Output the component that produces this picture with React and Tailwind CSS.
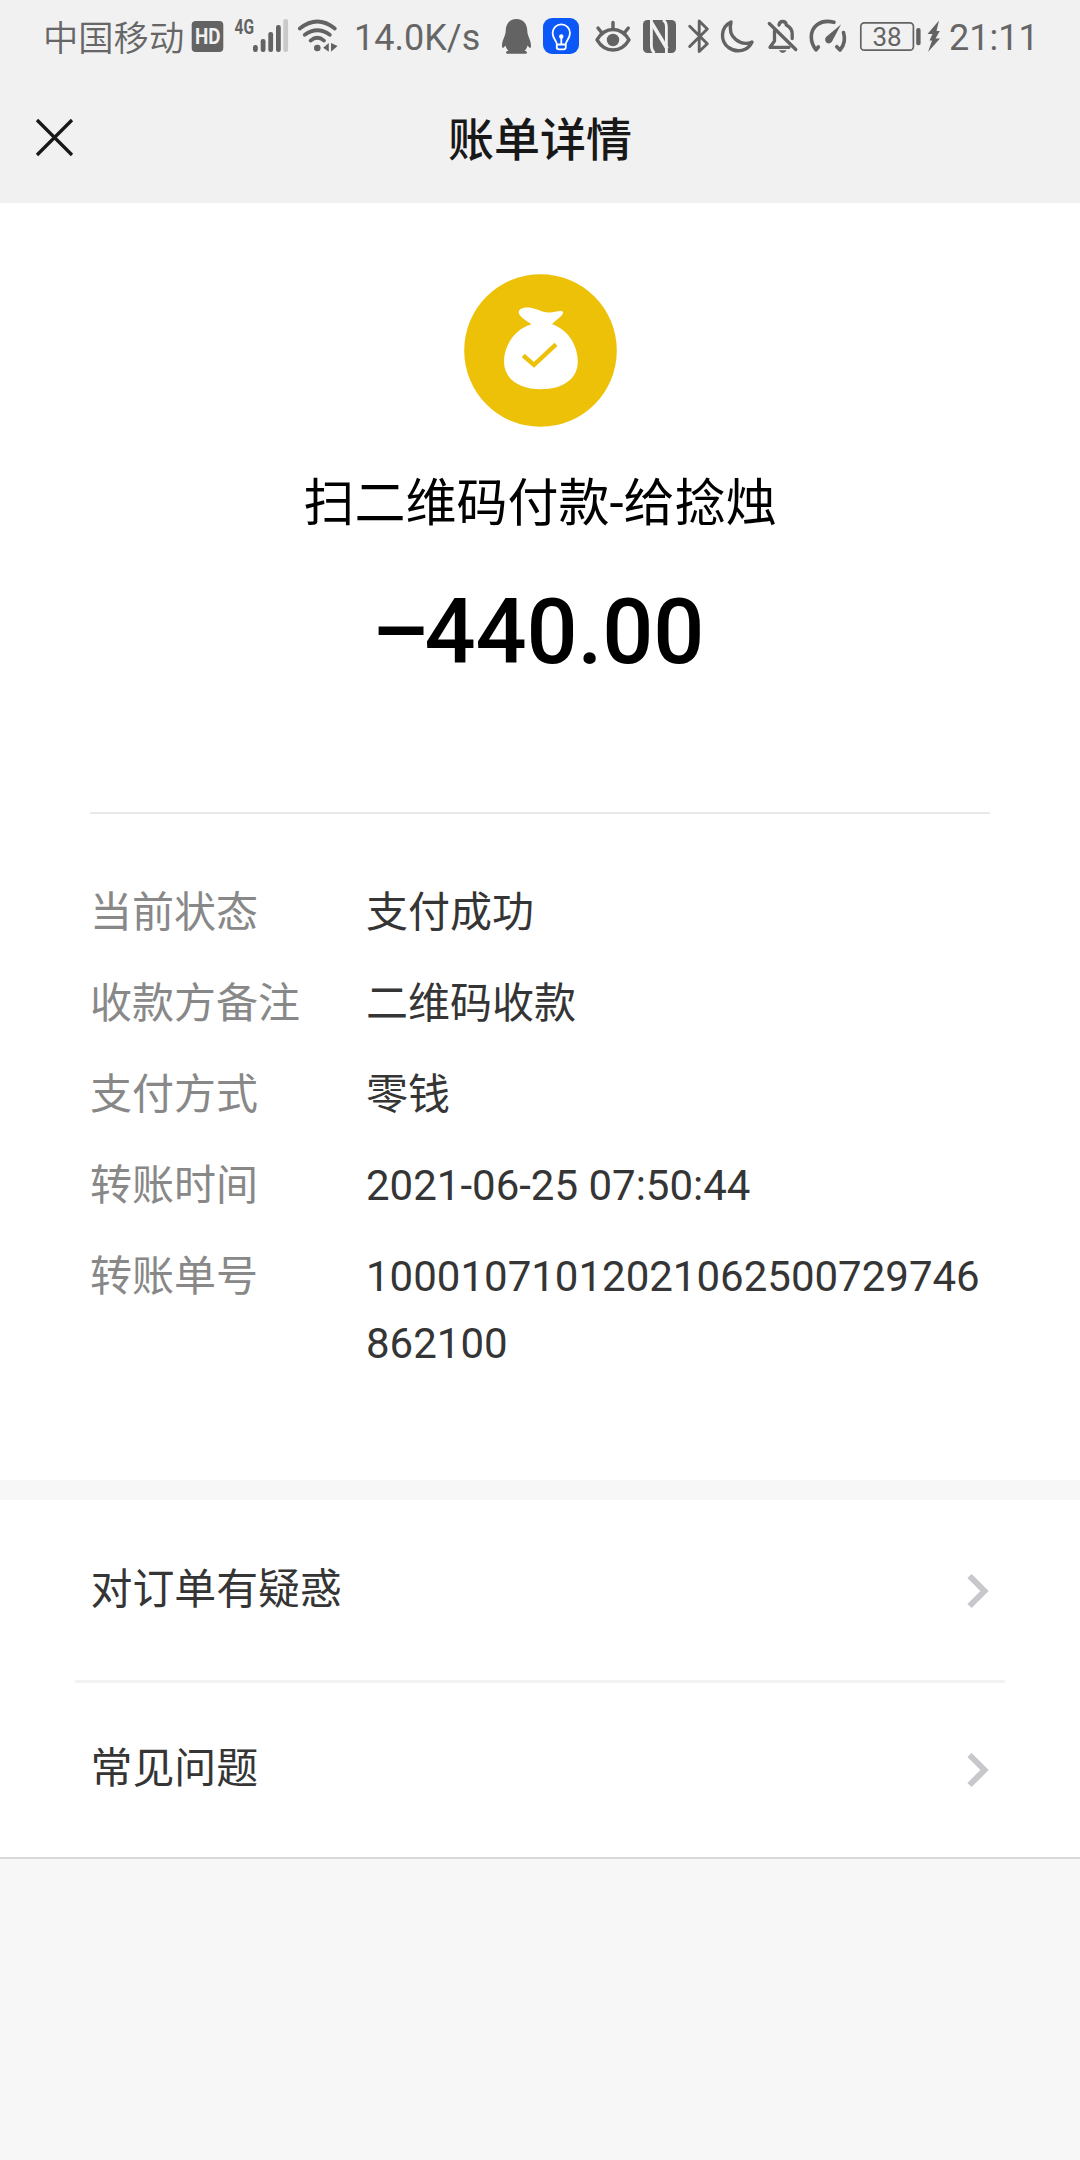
const FONT = "font-[Roboto,'Noto_Sans_CJK_SC',sans-serif]";

// A status bar glyph: x is its left edge in bar coordinates, w its slot width.
function Slot({ x, w, children }) {
  return (
    <svg
      className="shrink-0"
      width={w}
      height="76"
      viewBox={`${x} 0 ${w} 76`}
      fill="none"
      stroke="#636363"
      strokeLinecap="round"
      strokeLinejoin="round"
    >
      {children}
    </svg>
  );
}

const G = "#636363";

function StatusBar() {
  return (
    <div className="flex h-[76px] items-center overflow-hidden pl-[43px] text-[36px] leading-[76px] text-[#666666]">
      <span className="h-[76px] w-[143px] shrink-0 whitespace-nowrap text-[35.3px] font-[350] leading-[78px]">中国移动</span>
      <Slot x={186} w={42}>
        <rect x="191.7" y="21" width="31.6" height="31" rx="4" fill={G} stroke="none" />
        <text x="195" y="44" fontSize="21.5" fontWeight="700" textLength="25.5" lengthAdjust="spacingAndGlyphs" fill="#f1f1f1" stroke="none">HD</text>
      </Slot>
      <Slot x={228} w={64}>
        <text x="234.6" y="33.7" fontSize="19.7" fontWeight="700" textLength="19.5" lengthAdjust="spacingAndGlyphs" fill={G} stroke="none">4G</text>
        <g fill={G} stroke="none">
          <rect x="253" y="45" width="4.8" height="7" rx="2.2" />
          <rect x="260.7" y="39" width="4.8" height="13" rx="2.2" />
          <rect x="268.3" y="32" width="4.8" height="20" rx="2.2" />
          <rect x="276" y="25" width="4.8" height="27" rx="2.2" />
          <rect x="283.3" y="19" width="4.8" height="33" rx="2.2" fill="#c9c9c9" />
        </g>
      </Slot>
      <Slot x={292} w={62}>
        <g strokeWidth="3.8">
          <path d="M299.8 28.5Q317.3 14.5 334.8 28.5" />
          <path d="M304.8 34.8Q317.3 25.6 329.8 34.8" />
          <path d="M310.6 40.6Q317.3 35 324 40.6" />
        </g>
        <circle cx="317.3" cy="48" r="3.3" fill={G} stroke="none" />
        <path d="M323.2 47.8L328.8 43V51.8ZM331 43L337.6 46L331 51.8Z" fill={G} stroke="none" />
      </Slot>
      <span className="h-[76px] w-[136px] shrink-0 whitespace-nowrap">14.0K/s</span>
      <Slot x={490} w={48}>
        <path
          d="M516.5 19C509.5 19 505.7 24 505.7 31C505.7 36 502 40 502 45.5C502 48.5 503 49 505.5 45.5C506 48 507 49.5 508.5 50.7C505 51.3 505.5 53.7 508 53.7H525C527.5 53.7 528 51.3 524.5 50.7C526 49.5 527 48 527.5 45.5C530 49 531 48.5 531 45.5C531 40 527.3 36 527.3 31C527.3 24 523.5 19 516.5 19Z"
          fill={G}
          stroke="none"
        />
      </Slot>
      <Slot x={538} w={48}>
        <rect x="543" y="18" width="36" height="36" rx="9" fill="#0b57f7" stroke="none" />
        <g stroke="#fff" strokeWidth="1.8">
          <path d="M556.8 48.5V44C556.8 41 552.6 38.5 552.6 33A8.7 8.7 0 0 1 570 33C570 38.5 565.8 41 565.8 44V47Q565.8 49.3 563.5 49.3H559Q556.8 49.3 556.8 47M557 44.5H565.6M561.3 37V44" />
        </g>
        <circle cx="561.3" cy="36.5" r="2.2" fill="#fff" stroke="none" />
      </Slot>
      <Slot x={586} w={52}>
        <g strokeWidth="3.4">
          <path d="M597 39.8C605 26 621 26 629 39.8C621 53.3 605 53.3 597 39.8Z" />
          <path d="M613 22.5V28M598 28L602 33M628.3 28L624.3 33" />
        </g>
        <circle cx="613" cy="40" r="6.2" fill={G} stroke="none" />
      </Slot>
      <Slot x={638} w={44}>
        <rect x="643" y="20" width="33" height="33" rx="4.5" fill={G} stroke="none" />
        <g stroke="#f1f1f1" strokeLinecap="butt" strokeLinejoin="miter">
          <path d="M654.5 53Q651.4 50.5 651.4 46V20" strokeWidth="2.8" />
          <path d="M651.4 22.5L667 48.5" strokeWidth="3.6" />
          <path d="M663 20Q666.4 22 666.4 27V53" strokeWidth="2.8" />
        </g>
      </Slot>
      <Slot x={682} w={33}>
        <path d="M689.7 26.3L707.3 43.8L699.2 51.5V21L707.3 29L689.7 46.5" strokeWidth="2.9" />
      </Slot>
      <Slot x={715} w={45}>
        <path d="M731 22C720.5 27 719.8 41 728.5 47.5C737 53.5 748 51 752 42C741 46.5 727 38 731 22Z" strokeWidth="3.4" />
      </Slot>
      <Slot x={760} w={44}>
        <g strokeWidth="3.3">
          <path d="M769.3 23.5L795.8 49.5" />
          <path d="M774.5 31V41L770 47.3H789" />
          <path d="M779 25Q779.5 21.5 782.7 21.5Q786 21.5 786.3 25Q792.2 28 792.2 34V38.5" />
        </g>
        <path d="M779 50.3H786.5Q785.5 53 782.7 53Q780 53 779 50.3Z" fill={G} stroke="none" />
      </Slot>
      <Slot x={804} w={49}>
        <g strokeWidth="3.6">
          <path d="M834 22.3C820 18.5 811.3 27 811.3 37C811.3 42.5 813.3 46.5 816 49.8L818.3 47" />
          <path d="M843.5 32.5C845.5 39 844 45.5 840 50L836.8 46.7" />
        </g>
        <path d="M841 24.5L832 41.5Q829.5 44.5 826.5 42.7Q824 40 826 37Z" fill={G} stroke="none" />
      </Slot>
      <Slot x={853} w={70}>
        <rect x="860.8" y="22.8" width="52.6" height="27.4" rx="3.5" strokeWidth="1.7" />
        <rect x="916.2" y="28" width="4.4" height="17.3" rx="2" fill={G} stroke="none" />
        <text x="887" y="46" fontSize="26" textAnchor="middle" fill={G} stroke="none">38</text>
      </Slot>
      <Slot x={923} w={26}>
        <path d="M939 20.5L927.5 34H932.5L929.5 40.5H932L928 52L940 38.5H935.5L939.8 31H936.5Z" fill={G} stroke="none" />
      </Slot>
      <span className="h-[76px] shrink-0 whitespace-nowrap">21:11</span>
    </div>
  );
}

function TitleBar() {
  return (
    <div className="grid h-[127px] grid-cols-[1fr_auto_1fr] items-center">
      <svg className="mb-[4px] ml-[35px]" width="39" height="39" viewBox="0 0 39 39" stroke="#181818" strokeWidth="3.3">
        <path d="M2 2L37 37M37 2L2 37" />
      </svg>
      <h1 className="text-[46px] font-medium leading-none text-[#181818]">账单详情</h1>
    </div>
  );
}

function MoneyBag() {
  return (
    <svg width="154" height="154" viewBox="463 272.5 154 154">
      <circle cx="540.5" cy="350" r="76.3" fill="#edc107" />
      <path
        d="M531.5 323.8C526 320 519 316 518.7 312C518.5 308 524 306.5 529.5 307C537 308 543 312.5 550 312C555 311.5 561.5 309 563 311.5C564 315 556 319.5 552 323.8C568 329 577.8 345 577.8 361C577.8 379 562 388.7 541 388.7C520 388.7 504 379 504 361C504 344 516 328 531.5 323.8Z"
        fill="#fff"
      />
      <path d="M523.2 355L534 364.3L556 343.8" fill="none" stroke="#edc107" strokeWidth="4.4" />
    </svg>
  );
}

const DETAILS = [
  ["当前状态", "支付成功"],
  ["收款方备注", "二维码收款"],
  ["支付方式", "零钱"],
  ["转账时间", "2021-06-25 07:50:44"],
  ["转账单号", "10001071012021062500729746862100"],
];

function Details() {
  return (
    <dl className="mt-[65px] flex flex-col gap-6 text-[42px] leading-[67px]">
      {DETAILS.map(([label, value]) => (
        <div key={label} className="flex">
          <dt className="w-[276px] shrink-0 text-[#888888]">{label}</dt>
          <dd className="min-w-0 flex-1 break-all text-[#353535]">{value}</dd>
        </div>
      ))}
    </dl>
  );
}

function LinkRow({ children }) {
  return (
    <div className="flex items-center justify-between pl-[15.5px] pr-4 text-[41.9px] leading-[60px] text-[#353535]">
      <span className="-mt-[2px]">{children}</span>
      <svg width="22" height="36" viewBox="0 0 22 36" fill="none" stroke="#c8c8cc" strokeWidth="6">
        <path d="M2.5 3L17.5 18L2.5 33" />
      </svg>
    </div>
  );
}

export default function App() {
  return (
    <div className={`h-[2160px] w-[1080px] overflow-hidden bg-[#f7f7f7] ${FONT}`}>
      <header className="h-[203px] bg-[#f1f1f1]">
        <StatusBar />
        <TitleBar />
      </header>
      <main>
        <section className="flex h-[1277px] flex-col bg-white px-[90px]">
          <div className="flex h-[611px] flex-col items-center border-b-2 border-[#e8e8e8] pt-[70px] text-black">
            <MoneyBag />
            <p className="mt-[39px] text-[51px] leading-[76px]">扫二维码付款-给捻烛</p>
            <p className="mt-[38px] pr-[4px] text-[90px] font-medium leading-[106px] tracking-[-0.2px]">
              <span className="tracking-[-5px]">–</span>440.00
            </p>
          </div>
          <Details />
        </section>
        <section className="mt-5 h-[359px] border-b-2 border-[#d9d9d9] bg-white px-[75px]">
          <div className="flex h-[183px] flex-col justify-center border-b-3 border-[#f2f2f2] pt-px">
            <LinkRow>对订单有疑惑</LinkRow>
          </div>
          <div className="flex h-[174px] flex-col justify-center">
            <LinkRow>常见问题</LinkRow>
          </div>
        </section>
      </main>
    </div>
  );
}
